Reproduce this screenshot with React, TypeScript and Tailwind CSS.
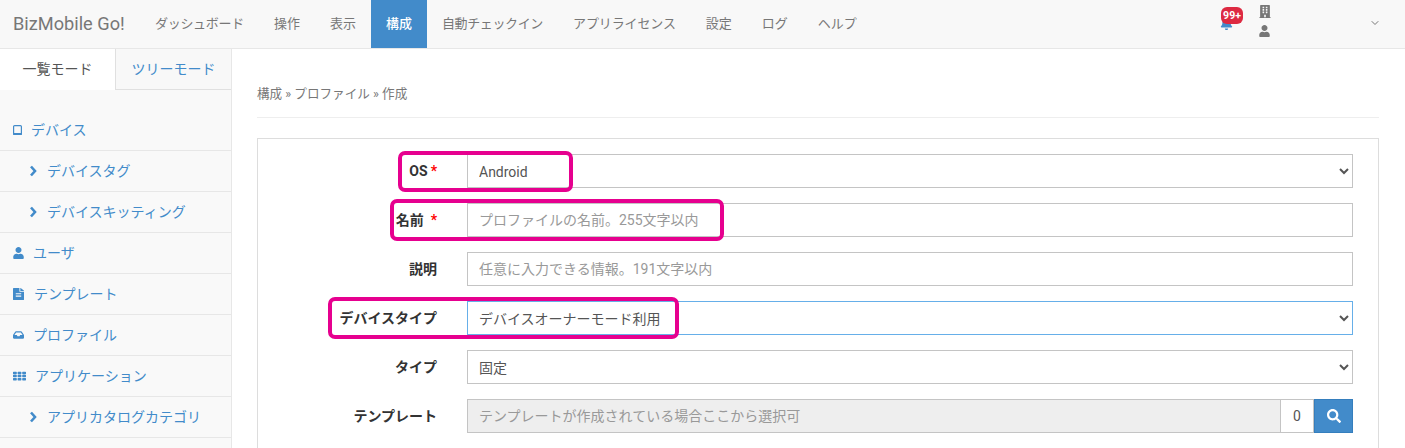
import React from 'react';
import { FaBell, FaBuilding, FaFileAlt, FaInbox, FaSearch, FaTh, FaUser } from 'react-icons/fa';
import { LuChevronDown } from 'react-icons/lu';

const navItems = [
    { name: 'ダッシュボード', spacing: 'tracking-[-0.3px]' },
    { name: '操作', spacing: '' },
    { name: '表示', spacing: '' },
    { name: '構成', spacing: '' },
    { name: '自動チェックイン', spacing: 'tracking-[-0.37px]' },
    { name: 'アプリライセンス', spacing: 'tracking-[-0.12px]' },
    { name: '設定', spacing: '' },
    { name: 'ログ', spacing: '' },
    { name: 'ヘルプ', spacing: '' },
];

function SideRow({ icon, label, gap }: { icon: React.ReactNode; label: string; gap: string }) {
    return (
        <div className={`flex h-[41px] items-center border-b border-[#e7e7e7] pl-[13px] text-[#428bca] ${gap}`}>
            {icon}
            <span>{label}</span>
        </div>
    );
}

function SubRow({ label }: { label: string }) {
    return (
        <div className="flex h-[41px] items-center gap-[10px] border-b border-[#e7e7e7] pl-[29px] text-[#428bca]">
            <svg viewBox="0 0 8 12" className="h-[12px] w-[8px]">
                <path d="M2 1.5 L6 6 L2 10.5" fill="none" stroke="currentColor" strokeWidth="2.6" />
            </svg>
            <span>{label}</span>
        </div>
    );
}

function FormRow({ label, required, children }: { label: string; required?: 'tight' | 'wide'; children: React.ReactNode }) {
    return (
        <div className="flex h-[34px] items-center">
            <label className="flex w-[179px] justify-end text-[14px] font-bold text-[#333]">
                {label}
                {required === 'tight' && <span className="ml-[3px] text-[#ff0000]">*</span>}
                {required === 'wide' && <span className="ml-[7px] text-[#ff0000]">*</span>}
            </label>
            <div className="ml-[30px] h-full flex-1">{children}</div>
        </div>
    );
}

function SelectBox({ value, focused }: { value: string; focused?: boolean }) {
    return (
        <select
            defaultValue={value}
            className={`h-full w-full border bg-white pl-[7px] pr-[8px] pt-[2px] text-[14px] text-[#555] ${focused ? 'border-[#66afe9]' : 'border-[#c4c4c4]'}`}
        >
            <option>{value}</option>
        </select>
    );
}

function TextBox({ placeholder }: { placeholder: string }) {
    return (
        <input
            placeholder={placeholder}
            className="h-full w-full border border-[#c4c4c4] bg-white px-[11px] text-[14px] text-[#555] placeholder:text-[#999]"
        />
    );
}

export default function App() {
    return (
        <div className="relative h-[448px] w-[1405px] overflow-hidden bg-white font-['Roboto','Noto_Sans_CJK_JP',sans-serif] text-[14px]">
            {/* Top navbar */}
            <header className="flex h-[49px] items-center border-b border-[#e7e7e7] bg-[#f8f8f8] text-[#777]">
                <div className="w-[140px] pl-[13px] text-[18.2px]">BizMobile Go!</div>
                <nav className="flex h-full text-[13px]">
                    {navItems.map((item) => (
                        <div
                            key={item.name}
                            className={`flex items-center px-[15px] ${item.spacing} ${item.name === '構成' ? 'bg-[#428bca] font-medium text-white' : ''}`}
                        >
                            {item.name}
                        </div>
                    ))}
                </nav>
                <div className="ml-auto flex h-full items-center">
                    <div className="relative mr-[23px] h-full w-[16px]">
                        <FaBell className="absolute left-[0px] top-[17px] h-[13px] w-[13px] text-[#428bca]" />
                        <span className="absolute left-[1px] top-[7px] flex h-[17px] w-[22px] items-center justify-center rounded-[6px] bg-[#dd2a42] text-[10.5px] font-bold text-white">
                            99+
                        </span>
                    </div>
                    <div className="mr-[98px] flex h-full flex-col gap-[7px] pt-[5px] text-[#777]">
                        <FaBuilding className="h-[13px] w-[12px]" />
                        <FaUser className="h-[12px] w-[11px]" />
                    </div>
                    <LuChevronDown className="mb-[2px] mr-[24px] h-[12px] w-[12px] text-[#777]" />
                </div>
            </header>

            <div className="flex h-[399px]">
                {/* Sidebar */}
                <aside className="w-[232px] shrink-0 border-r border-[#e7e7e7] bg-[#f9f9f9]">
                    <div className="flex h-[41px]">
                        <div className="flex w-[115px] items-center justify-center bg-white text-[#555]">一覧モード</div>
                        <div className="flex flex-1 items-center justify-center border-b border-l border-[#e0e0e0] bg-[#f8f8f8] text-[#428bca]">
                            ツリーモード
                        </div>
                    </div>
                    <div className="mt-[20px]">
                        <SideRow
                            gap="gap-[9px]"
                            label="デバイス"
                            icon={
                                <svg viewBox="0 0 9 10" className="h-[10px] w-[9px] text-[#428bca]">
                                    <rect x="0.6" y="0.6" width="7.8" height="8.8" rx="1" fill="none" stroke="currentColor" strokeWidth="1.2" />
                                    <rect x="0" y="8" width="9" height="2" rx="0.8" fill="currentColor" />
                                </svg>
                            }
                        />
                        <SubRow label="デバイスタグ" />
                        <SubRow label="デバイスキッティング" />
                        <SideRow gap="gap-[9px]" label="ユーザ" icon={<FaUser className="h-[12px] w-[11px]" />} />
                        <SideRow gap="gap-[10px]" label="テンプレート" icon={<FaFileAlt preserveAspectRatio="none" className="h-[12px] w-[11px]" />} />
                        <SideRow gap="gap-[9px]" label="プロファイル" icon={<FaInbox preserveAspectRatio="none" className="h-[10px] w-[11px]" />} />
                        <SideRow gap="gap-[9px]" label="アプリケーション" icon={<FaTh preserveAspectRatio="none" className="h-[10px] w-[13px]" />} />
                        <SubRow label="アプリカタログカテゴリ" />
                    </div>
                </aside>

                {/* Main content */}
                <main className="flex-1 pl-[25px] pr-[26px]">
                    <div className="flex h-[69px] items-end border-b border-[#eee] pb-[14px] text-[12.6px] leading-[18px] text-[#777]">
                        構成 » プロファイル » 作成
                    </div>
                    <section className="mt-[20px] flex flex-col gap-[15px] border border-[#ddd] pb-[15px] pr-[25px] pt-[15px]">
                        <FormRow label="OS" required="tight">
                            <SelectBox value="Android" />
                        </FormRow>
                        <FormRow label="名前" required="wide">
                            <TextBox placeholder="プロファイルの名前。255文字以内" />
                        </FormRow>
                        <FormRow label="説明">
                            <TextBox placeholder="任意に入力できる情報。191文字以内" />
                        </FormRow>
                        <FormRow label="デバイスタイプ">
                            <SelectBox value="デバイスオーナーモード利用" focused />
                        </FormRow>
                        <FormRow label="タイプ">
                            <SelectBox value="固定" />
                        </FormRow>
                        <FormRow label="テンプレート">
                            <div className="flex h-full">
                                <input
                                    disabled
                                    placeholder="テンプレートが作成されている場合ここから選択可"
                                    className="h-full flex-1 border border-[#c4c4c4] bg-[#eee] px-[11px] text-[14px] placeholder:text-[#999]"
                                />
                                <div className="flex w-[33px] items-center justify-center border-y border-r border-[#c4c4c4] text-[#555]">0</div>
                                <button className="flex w-[39px] items-center justify-center border border-[#357ebd] bg-[#428bca] text-white">
                                    <FaSearch className="h-[14px] w-[14px]" />
                                </button>
                            </div>
                        </FormRow>
                    </section>
                </main>
            </div>

            {/* Hand-drawn highlight marks over the form */}
            <div className="absolute left-[398px] top-[151px] h-[41px] w-[175px] rounded-[7px] border-4 border-[#e6008f]" />
            <div className="absolute left-[390px] top-[199px] h-[42px] w-[334px] rounded-[7px] border-4 border-[#e6008f]" />
            <div className="absolute left-[328px] top-[297px] h-[42px] w-[351px] rounded-[7px] border-4 border-[#e6008f]" />
        </div>
    );
}
